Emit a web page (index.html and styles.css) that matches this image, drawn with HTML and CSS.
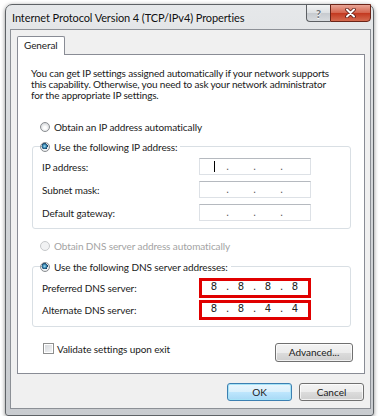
FILE: index.html
```html
<!DOCTYPE html>
<html lang="en">
<head>
    <meta charset="UTF-8">
    <title>Internet Protocol Version 4 (TCP/IPv4) Properties</title>
    <link rel="stylesheet" href="styles.css">
</head>
<body>
    <div class="window">
        <div class="titlebar">
            <span class="title">Internet Protocol Version 4 (TCP/IPv4) Properties</span>
            <div class="caption-btns">
                <span class="cap help">?</span>
                <span class="cap close">
                    <svg width="13" height="10" viewBox="0 0 13 10">
                        <path d="M3 1.5 L10 8.5 M10 1.5 L3 8.5" stroke="#5b1a12" stroke-width="3.6" stroke-linecap="round"/>
                        <path d="M3 1.5 L10 8.5 M10 1.5 L3 8.5" stroke="#fff" stroke-width="2" stroke-linecap="round"/>
                    </svg>
                </span>
            </div>
        </div>

        <div class="client">
            <div class="tabs">
                <span class="tab">General</span>
            </div>

            <div class="panel">
                <p class="intro">You can get IP settings assigned automatically if your network supports<br>
                this capability. Otherwise, you need to ask your network administrator<br>
                for the appropriate IP settings.</p>

                <div class="option"><span class="radio"></span>Obtain an IP address automatically</div>

                <fieldset class="group">
                    <legend class="option"><span class="radio on"></span>Use the following IP address:</legend>
                    <div class="field-row">
                        <span>IP address:</span>
                        <div class="ip">
                            <span class="seg"><i class="caret"></i></span><span class="dot">.</span>
                            <span class="seg"></span><span class="dot">.</span>
                            <span class="seg"></span><span class="dot">.</span>
                            <span class="seg"></span>
                        </div>
                    </div>
                    <div class="field-row">
                        <span>Subnet mask:</span>
                        <div class="ip">
                            <span class="seg"></span><span class="dot">.</span>
                            <span class="seg"></span><span class="dot">.</span>
                            <span class="seg"></span><span class="dot">.</span>
                            <span class="seg"></span>
                        </div>
                    </div>
                    <div class="field-row">
                        <span>Default gateway:</span>
                        <div class="ip">
                            <span class="seg"></span><span class="dot">.</span>
                            <span class="seg"></span><span class="dot">.</span>
                            <span class="seg"></span><span class="dot">.</span>
                            <span class="seg"></span>
                        </div>
                    </div>
                </fieldset>

                <div class="option disabled"><span class="radio"></span>Obtain DNS server address automatically</div>

                <fieldset class="group dns">
                    <legend class="option"><span class="radio on"></span>Use the following DNS server addresses:</legend>
                    <div class="field-row">
                        <span>Preferred DNS server:</span>
                        <div class="ip marked">
                            <span class="seg">8</span><span class="dot">.</span>
                            <span class="seg">8</span><span class="dot">.</span>
                            <span class="seg">8</span><span class="dot">.</span>
                            <span class="seg">8</span>
                        </div>
                    </div>
                    <div class="field-row">
                        <span>Alternate DNS server:</span>
                        <div class="ip marked">
                            <span class="seg">8</span><span class="dot">.</span>
                            <span class="seg">8</span><span class="dot">.</span>
                            <span class="seg">4</span><span class="dot">.</span>
                            <span class="seg">4</span>
                        </div>
                    </div>
                </fieldset>

                <div class="bottom-row">
                    <div class="check-option"><span class="checkbox"></span>Validate settings upon exit</div>
                    <button class="btn advanced">Advanced...</button>
                </div>
            </div>

            <div class="footer">
                <button class="btn default">OK</button>
                <button class="btn">Cancel</button>
            </div>
        </div>
    </div>
</body>
</html>
```

FILE: styles.css
```css
body {
    margin: 0;
    background: #fff;
    font-family: Lato, 'Noto Sans', sans-serif;
    font-size: 10px;
    letter-spacing: -0.1px;
    color: #1a1a1a;
}

.window {
    width: 361px;
    margin: 4px 0 0 5px;
    padding: 0 2px 6px 4px;
    border: 1px solid #5e6266;
    border-radius: 7px 7px 3px 3px;
    background: linear-gradient(#e6e8ea, #d3d6d9 40%, #c9ccd0);
    box-shadow: 0 1px 4px rgba(0,0,0,0.45);
}

.titlebar {
    display: flex;
    align-items: center;
    height: 24px;
    padding-left: 2px;
}

.title {
    font-size: 11px;
    color: #111;
    text-shadow: 0 0 6px rgba(255,255,255,0.9);
}

.caption-btns {
    display: flex;
    align-self: flex-start;
    margin-left: auto;
    margin-top: -1px;
}

.cap {
    display: flex;
    align-items: center;
    justify-content: center;
    height: 16px;
    border: 1px solid #5c5f63;
}

.help {
    width: 23px;
    border-right: none;
    border-radius: 0 0 0 4px;
    background: linear-gradient(#f2f3f4, #dcdfe2 50%, #c6cacf 51%, #d8dbde);
    color: #6c7177;
    font-weight: bold;
    font-size: 11px;
    text-shadow: 0 1px 0 #fff;
}

.close {
    width: 39px;
    border-color: #6b2418;
    border-radius: 0 0 4px 0;
    background: linear-gradient(#e9a596, #d4634c 50%, #c2381f 51%, #d56a4f);
}

.client {
    padding: 6px 5px 7px 6px;
    border: 1px solid #8c9096;
    background: #f0f0f0;
}

.tabs {
    display: flex;
    height: 18px;
}

.tab {
    position: relative;
    height: 18px;
    padding: 0 6px;
    border: 1px solid #898c95;
    border-bottom: none;
    border-radius: 2px 2px 0 0;
    background: #fff;
    line-height: 17px;
    color: #222;
}

.panel {
    padding: 13px 11px 11px 13px;
    border: 1px solid #898c95;
    background: #fff;
}

.intro {
    margin: 0;
    line-height: 11px;
    letter-spacing: -0.17px;
    white-space: nowrap;
}

.option {
    display: flex;
    align-items: center;
    height: 14px;
    margin: 19px 0 0 9px;
}

.option.disabled {
    margin-top: 10px;
    color: #a3a3a3;
}

.radio {
    box-sizing: border-box;
    width: 10px;
    height: 10px;
    margin-right: 4px;
    border: 1px solid #8a8d91;
    border-radius: 50%;
    background: radial-gradient(circle at 50% 60%, #fff 20%, #e4e6e8 55%, #c9ccd0);
}

.radio.on {
    background:
        radial-gradient(circle at 45% 40%, #a9e6f7 0, #3f8fba 1.6px, #173f63 3px, transparent 3.2px),
        radial-gradient(circle, #f6f7f8 40%, #d7dadd);
}

.disabled .radio {
    border-color: #c6c8ca;
    background: #f1f2f3;
}

.group {
    width: 319px;
    box-sizing: border-box;
    margin: 6px 0 0 1px;
    padding: 5px 0 7px 9px;
    border: 1px solid #d9dfe4;
    border-radius: 3px;
}

.group legend.option {
    height: 13px;
    margin: 0 0 0 -2px;
    padding: 0 3px 0 0;
}

.group.dns {
    margin-top: 7px;
    padding: 5px 0 6px 9px;
}

.field-row {
    display: grid;
    grid-template-columns: 157px 112px;
    align-items: center;
    height: 17px;
}

.field-row + .field-row {
    margin-top: 6px;
}

.dns .field-row {
    height: 20px;
}

.dns .field-row + .field-row {
    margin-top: 2px;
}

.ip {
    box-sizing: border-box;
    display: flex;
    align-items: flex-end;
    height: 17px;
    padding: 0 0 1px 3px;
    border: 1px solid #dde1e6;
    border-top-color: #b5b9bf;
    font-family: 'DejaVu Sans', sans-serif;
    font-size: 10px;
    line-height: 12px;
    letter-spacing: 0;
}

.seg {
    display: flex;
    justify-content: center;
    align-items: flex-end;
    width: 22px;
}

.dot {
    width: 5px;
    text-align: center;
    color: #555;
}

.caret {
    display: block;
    width: 1px;
    height: 11px;
    margin-bottom: 1px;
    background: #000;
}

.ip.marked {
    height: 20px;
    padding: 0 0 2px 1px;
    border: 3px solid #e00000;
    color: #222;
}

.ip.marked .dot {
    color: #222;
}

.bottom-row {
    display: flex;
    justify-content: space-between;
    align-items: flex-start;
    margin-top: 16px;
}

.check-option {
    display: flex;
    align-items: center;
    height: 11px;
    margin-left: 12px;
}

.checkbox {
    box-sizing: border-box;
    width: 11px;
    height: 11px;
    margin-right: 3px;
    border: 1px solid #8e8f8f;
    background: linear-gradient(135deg, #d3d6da, #f6f7f8);
    box-shadow: inset 0 0 0 1px #fff;
}

.btn {
    box-sizing: border-box;
    height: 18px;
    padding: 0;
    border: 1px solid #707070;
    border-radius: 3px;
    background: linear-gradient(#f3f3f3, #ececec 50%, #dcdcdc 51%, #cfcfcf);
    box-shadow: inset 0 0 0 1px rgba(255,255,255,0.7);
    font-family: Lato, 'Noto Sans', sans-serif;
    font-size: 10px;
    color: #1a1a1a;
    line-height: 15px;
}

.advanced {
    width: 78px;
    height: 19px;
}

.footer {
    display: flex;
    justify-content: flex-end;
    gap: 7px;
    margin: 9px 1px 0 0;
}

.footer .btn {
    width: 65px;
}

.btn.default {
    border-color: #3c7fb1;
    background: linear-gradient(#eaf6fd, #d9f0fc 50%, #bee6fd 51%, #a7d9f5);
    box-shadow: inset 0 0 0 1px #a6e3f7;
}
```
